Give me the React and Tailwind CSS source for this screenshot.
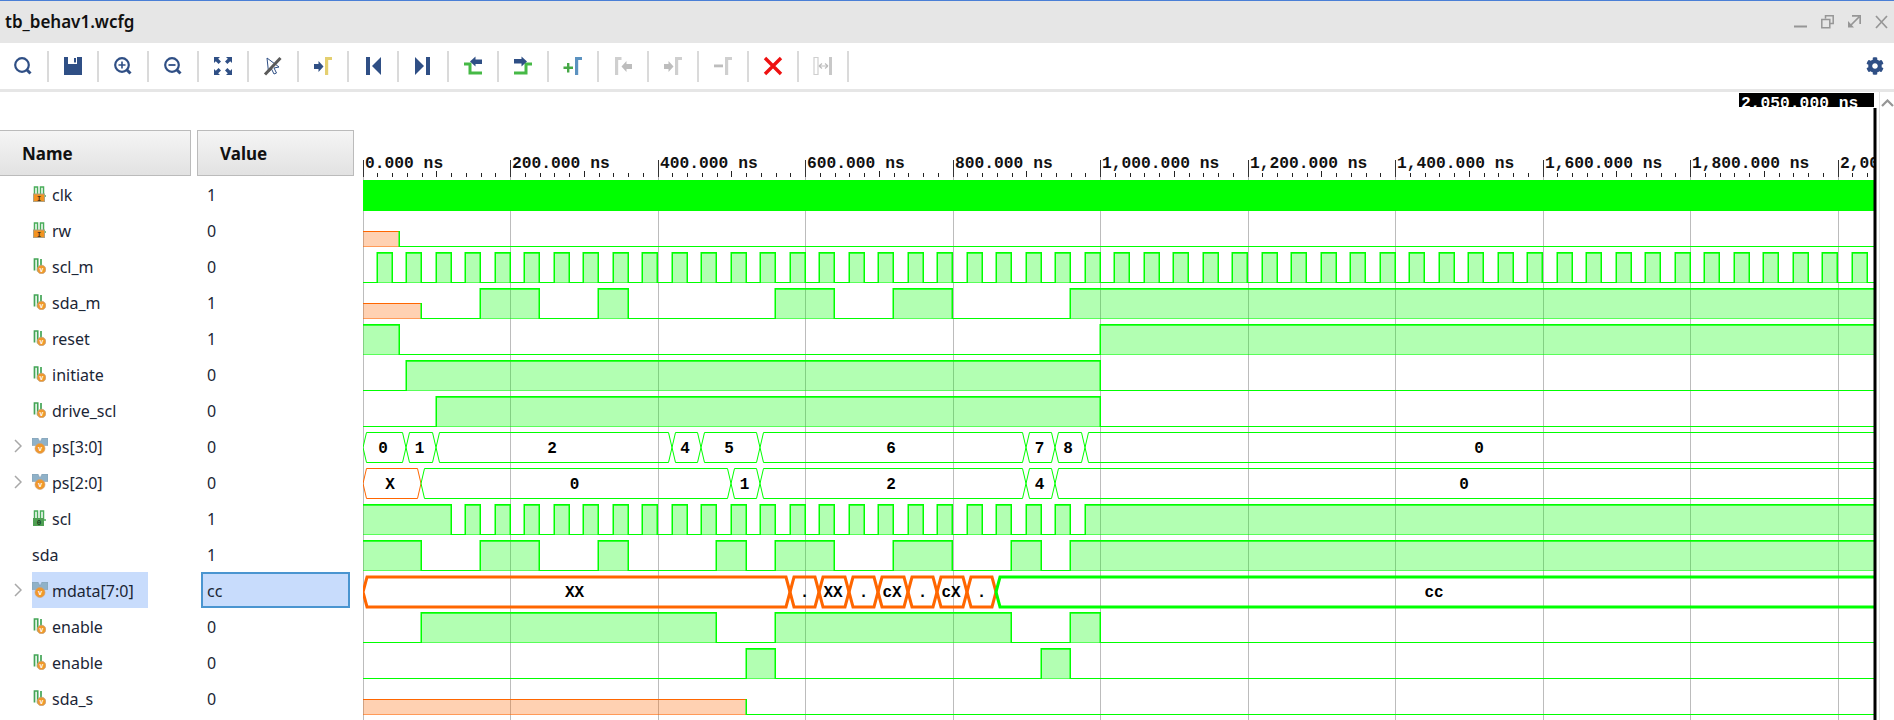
import React from 'react';
import { FaCog } from 'react-icons/fa';

const BLUE = '#2f4f85';
const G = '#00ff00';
const O = '#ff6600';
const MONO = '"Liberation Mono", monospace';
const X = (t) => Math.round(362 + 0.7375 * t);
const GX = (t) => Math.floor(363.2 + 0.7375 * t);
const END = 2050;

function clock(from, to, startHigh = false) {
  const s = [];
  let hi = startHigh;
  for (let t = from; t < to; t += 20) {
    s.push([t, t + 20, hi ? 'H' : 'L']);
    hi = !hi;
  }
  return s;
}

const levels = [
  { k: 1, s: [[0, 50, 'X'], [50, END, 'L']] },
  { k: 2, s: clock(0, END) },
  { k: 3, s: [[0, 80, 'X'], [80, 160, 'L'], [160, 240, 'H'], [240, 320, 'L'], [320, 360, 'H'], [360, 560, 'L'], [560, 640, 'H'], [640, 720, 'L'], [720, 800, 'H'], [800, 960, 'L'], [960, END, 'H']] },
  { k: 4, s: [[0, 50, 'H'], [50, 1000, 'L'], [1000, END, 'H']] },
  { k: 5, s: [[0, 60, 'L'], [60, 1000, 'H'], [1000, END, 'L']] },
  { k: 6, s: [[0, 100, 'L'], [100, 1000, 'H'], [1000, END, 'L']] },
  { k: 9, s: [[0, 120, 'H'], [120, 140, 'L'], ...clock(140, 960, true), [960, 980, 'L'], [980, END, 'H']] },
  { k: 10, s: [[0, 80, 'H'], [80, 160, 'L'], [160, 240, 'H'], [240, 320, 'L'], [320, 360, 'H'], [360, 480, 'L'], [480, 520, 'H'], [520, 560, 'L'], [560, 640, 'H'], [640, 720, 'L'], [720, 800, 'H'], [800, 880, 'L'], [880, 920, 'H'], [920, 960, 'L'], [960, END, 'H']] },
  { k: 12, s: [[0, 80, 'L'], [80, 480, 'H'], [480, 560, 'L'], [560, 880, 'H'], [880, 960, 'L'], [960, 1000, 'H'], [1000, END, 'L']] },
  { k: 13, s: [[0, 520, 'L'], [520, 560, 'H'], [560, 920, 'L'], [920, 960, 'H'], [960, END, 'L']] },
  { k: 14, s: [[0, 520, 'X'], [520, END, 'L']] },
];

const buses = [
  { k: 7, sw: 1, d: 3.5, c: [[0, 60, '0', G, 383], [60, 100, '1', G, 419.5], [100, 420, '2', G, 552], [420, 460, '4', G, 685], [460, 540, '5', G, 729], [540, 900, '6', G, 891], [900, 940, '7', G, 1039.5], [940, 980, '8', G, 1068], [980, 2100, '0', G, 1479]] },
  { k: 8, sw: 1, d: 3.5, c: [[0, 80, 'X', O, 390], [80, 500, '0', G, 574.5], [500, 540, '1', G, 744.5], [540, 900, '2', G, 891], [900, 940, '4', G, 1039.5], [940, 2100, '0', G, 1464]] },
  { k: 11, sw: 3, d: 4, c: [[0, 580, 'XX', O, 574.5], [580, 620, '.', O, 804.5], [620, 660, 'XX', O, 833], [660, 700, '.', O, 863.5], [700, 740, 'cX', O, 892], [740, 780, '.', O, 922.5], [780, 820, 'cX', O, 951], [820, 860, '.', O, 981.5], [860, 2100, 'cc', G, 1434]] },
];

function Digital({ k, s }) {
  const top = 180 + 36 * k;
  const bot = 210 + 36 * k;
  const mid = top + 15;
  const yOf = (v) => (v === 'H' ? top : v === 'X' ? mid : bot);
  return (
    <g>
      {s.map(([a, b, v], i) => {
        const x0 = i === 0 ? 363 : X(a);
        const w = Math.min(X(b), 1874) - x0;
        if (v === 'H')
          return (
            <g key={i}>
              <rect x={x0} y={top} width={w} height={bot - top + 1} fill={G} fillOpacity="0.3" />
              <rect x={x0} y={top} width={w} height="1.7" fill={G} />
              <rect x={x0} y={bot} width={w} height="1" fill={G} fillOpacity="0.5" />
            </g>
          );
        if (v === 'X')
          return (
            <g key={i}>
              <rect x={x0} y={mid} width={w} height={bot - mid + 1} fill={O} fillOpacity="0.3" />
              <rect x={x0} y={mid} width={w} height="1" fill={O} />
              <rect x={x0} y={bot} width={w} height="1" fill={O} fillOpacity="0.5" />
            </g>
          );
        return <rect key={i} x={x0} y={bot} width={w} height="1" fill={G} />;
      })}
      {s.slice(1).map(([a, , v], i) => {
        const p = yOf(s[i][2]);
        const q = yOf(v);
        return <rect key={i} x={X(a) - 0.5} y={Math.min(p, q)} width="1.5" height={Math.abs(p - q) + 1} fill={G} />;
      })}
    </g>
  );
}

function Bus({ k, sw, d, c }) {
  const top = 180 + 36 * k + (sw > 1 ? 1 : 0.5);
  const bot = 210 + 36 * k + (sw > 1 ? 1 : 0.5);
  const mid = (top + bot) / 2;
  return (
    <g>
      {c.map(([a, b, label, col, cx], i) => {
        const x0 = i === 0 ? 363 : X(a);
        const x1 = X(b);
        const pts = `${x0},${mid} ${x0 + d},${top} ${x1 - d},${top} ${x1},${mid} ${x1 - d},${bot} ${x0 + d},${bot}`;
        return (
          <g key={i}>
            <polygon points={pts} fill="none" stroke={col} strokeWidth={sw} />
            <text x={cx} y={mid + 5} textAnchor="middle" fontFamily={MONO} fontWeight="700" fontSize="16" fill="#000">
              {label}
            </text>
          </g>
        );
      })}
    </g>
  );
}

function Ruler() {
  const ticks = [];
  for (let t = 20; t < 2050; t += 20) {
    if (t % 200 === 0) continue;
    const mid = t % 100 === 0;
    ticks.push(<rect key={t} x={GX(t)} y={mid ? 171 : 173} width="1" height={mid ? 6 : 4} fill="#222" />);
  }
  const majors = [];
  for (let t = 0; t <= 2000; t += 200) {
    const x = GX(t);
    const s =
      t === 2000 ? '2,00' : t >= 1000 ? `${Math.floor(t / 1000)},${String(t % 1000).padStart(3, '0')}.000 ns` : `${t}.000 ns`;
    majors.push(
      <g key={t}>
        <rect x={x} y="160" width="1" height="17" fill="#333" />
        <text x={x + 2} y="168" fontFamily={MONO} fontWeight="700" fontSize="16.3" fill="#111">
          {s}
        </text>
      </g>
    );
  }
  return (
    <g clipPath="url(#waveclip)">
      {ticks}
      {majors}
    </g>
  );
}

function Wave() {
  const grid = [];
  for (let t = 0; t <= 2000; t += 200) {
    grid.push(<rect key={t} x={GX(t)} y="177" width="1" height="543" fill="#bcbcbc" />);
  }
  return (
    <svg className="block shrink-0" width="1516" height="628" viewBox="363 92 1516 628">
      <defs>
        <clipPath id="waveclip">
          <rect x="363" y="92" width="1512" height="628" />
        </clipPath>
        <clipPath id="flagclip">
          <rect x="1739" y="93" width="135" height="14" />
        </clipPath>
      </defs>
      {grid}
      <Ruler />
      <rect x="363" y="180" width="1511" height="31" fill={G} />
      <g clipPath="url(#waveclip)">
        {levels.map((l) => (
          <Digital key={l.k} k={l.k} s={l.s} />
        ))}
        {buses.map((b) => (
          <Bus key={b.k} {...b} />
        ))}
      </g>
      <rect x="1739" y="93" width="135" height="14" fill="#000" />
      <text x="1741" y="108" clipPath="url(#flagclip)" fontFamily={MONO} fontSize="16.3" fontWeight="700" fill="#fff">
        2,050.000 ns
      </text>
      <rect x="1873.5" y="108" width="3" height="612" fill="#000" />
    </svg>
  );
}

/* ---------- toolbar icons ---------- */
const Ic = ({ children }) => (
  <svg width="20" height="20" viewBox="0 0 20 20" className="block">
    {children}
  </svg>
);
const Marker = ({ c, flip }) =>
  flip ? <path d="M2 1h6.500v3H5.200v15H2z" fill={c} /> : <path d="M12 1h7v3h-3.800v15H12z" fill={c} />;
const ArrowR = ({ c }) => <path d="M1 8h4.500V5l5 5.500-5 5.500v-3H1z" fill={c} />;
const Lens = ({ children }) => (
  <Ic>
    <circle cx="9" cy="9" r="6.800" fill="none" stroke={BLUE} strokeWidth="2.200" />
    <path d="M14 14l3.500 3.500" stroke={BLUE} strokeWidth="3" />
    {children}
  </Ic>
);

const tools = [
  <Lens />,
  <Ic>
    <path d="M1 1h18v18H1z" fill={BLUE} />
    <path d="M5 1h9v7H5z" fill="#fff" />
    <path d="M11 2h2v4.500h-2z" fill={BLUE} />
  </Ic>,
  <Lens>
    <path d="M9 5.500v7M5.500 9h7" stroke={BLUE} strokeWidth="1.600" />
  </Lens>,
  <Lens>
    <path d="M5.500 9h7" stroke={BLUE} strokeWidth="1.800" />
  </Lens>,
  <Ic>
    <path d="M1 1h6L5.200 2.800 8 5.600 5.600 8 2.800 5.200 1 7zM19 1v6l-1.800-1.800L14.400 8 12 5.600l2.800-2.800L13 1zM1 19v-6l1.800 1.800L5.600 12 8 14.400l-2.800 2.800L7 19zM19 19h-6l1.800-1.800L12 14.400l2.400-2.400 2.800 2.800L19 13z" fill={BLUE} />
  </Ic>,
  <Ic>
    <path d="M4 2l12 9-5 1 2.500 5-2.500 1-2.500-5-3 3z" fill="#fff" stroke={BLUE} strokeWidth="1" />
    <path d="M2 18.500L17.500 2" stroke="#5a5a5a" strokeWidth="3" />
  </Ic>,
  <Ic>
    <ArrowR c={BLUE} />
    <Marker c="#e4cf70" />
  </Ic>,
  <Ic>
    <path d="M3 1h4v18H3z" fill={BLUE} />
    <path d="M18 1v18l-9-9z" fill={BLUE} />
  </Ic>,
  <Ic>
    <path d="M13 1h4v18h-4z" fill={BLUE} />
    <path d="M2 1v18l9-9z" fill={BLUE} />
  </Ic>,
  <Ic>
    <path d="M1 8h6v9h12" fill="none" stroke="#46b946" strokeWidth="3" />
    <path d="M7 5.500l5.500-5v3H19v4.500h-6.500v2.500z" fill={BLUE} />
  </Ic>,
  <Ic>
    <path d="M1 17h12V8h6" fill="none" stroke="#46b946" strokeWidth="3" />
    <path d="M1 3h7.500V.5l5.500 5-5.500 5V7.500H1z" fill={BLUE} />
  </Ic>,
  <Ic>
    <path d="M4 7h2.400v3.500H10V13H6.400v3.500H4V13H.5v-2.500H4z" fill="#46a846" />
    <Marker c="#5b92c0" />
  </Ic>,
  <Ic>
    <Marker c="#cfcfcf" flip />
    <path d="M19 8h-5.500V5l-5 5.500 5 5.500v-3H19z" fill="#bdbdbd" />
  </Ic>,
  <Ic>
    <ArrowR c="#bdbdbd" />
    <Marker c="#cfcfcf" />
  </Ic>,
  <Ic>
    <path d="M1 8.500h9v2.800H1z" fill="#bdbdbd" />
    <Marker c="#cfcfcf" />
  </Ic>,
  <Ic>
    <path d="M2 2l16 16M18 2L2 18" stroke="#ee1111" strokeWidth="3.400" />
  </Ic>,
  <Ic>
    <path d="M1 1.500h4v17H1z" fill="none" stroke="#cfcfcf" strokeWidth="1.200" />
    <path d="M16 1h3v18h-3z" fill="#c8c8c8" />
    <path d="M6 10h9M6 10l3-2.500M6 10l3 2.500M15 10l-3-2.500M15 10l-3 2.500" fill="none" stroke="#bdbdbd" strokeWidth="1.200" />
  </Ic>,
];

/* ---------- signal icons ---------- */
const SigI = () => (
  <svg width="13" height="16" viewBox="0 0 13 16" className="block ml-px">
    <path d="M1.500 9V1h3v9M7.500 9V1h3v9H13" fill="none" stroke="#49ad5a" strokeWidth="1.500" />
    <rect x="0.500" y="8" width="11" height="7.500" fill="#f39320" stroke="#b0a080" strokeWidth="1" />
    <text x="6" y="14.500" textAnchor="middle" fontSize="7" fontWeight="700" fontFamily={MONO} fill="#4a3418">I</text>
  </svg>
);
const SigV = () => (
  <svg width="13" height="16" viewBox="0 0 13 16" className="block ml-px">
    <path d="M1.500 12.500V1h3.200v11.500H8V1" fill="none" stroke="#43a556" strokeWidth="1.700" />
    <circle cx="8.500" cy="11.500" r="4.300" fill="#f0982c" stroke="#c4a27c" strokeWidth="0.800" />
    <text x="8.500" y="14" textAnchor="middle" fontSize="6.500" fontWeight="700" fontFamily={MONO} fill="#fff">v</text>
  </svg>
);
const SigO = () => (
  <svg width="13" height="16" viewBox="0 0 13 16" className="block ml-px">
    <path d="M1.500 9V1h3v9M7.500 9V1h3v9H13" fill="none" stroke="#49ad5a" strokeWidth="1.500" />
    <rect x="0" y="8" width="11" height="8" fill="#4f9f53" />
    <text x="6" y="15" textAnchor="middle" fontSize="7.500" fontWeight="700" fontFamily={MONO} fill="#173d1c">0</text>
  </svg>
);
const SigBus = () => (
  <svg width="16" height="16" viewBox="0 0 16 16" className="block">
    <path d="M0 0h6l2 4 2-4h6v7.500h-4L8 10 4 7.500H0z" fill="#8fb1c8" stroke="#7d96aa" strokeWidth="0.500" />
    <circle cx="8" cy="10.500" r="5" fill="#f0982c" stroke="#d0a070" strokeWidth="0.600" />
    <text x="8" y="13" textAnchor="middle" fontSize="7" fontWeight="700" fontFamily={MONO} fill="#fff">v</text>
  </svg>
);

const rows = [
  ['clk', '1', SigI],
  ['rw', '0', SigI],
  ['scl_m', '0', SigV],
  ['sda_m', '1', SigV],
  ['reset', '1', SigV],
  ['initiate', '0', SigV],
  ['drive_scl', '0', SigV],
  ['ps[3:0]', '0', SigBus, true],
  ['ps[2:0]', '0', SigBus, true],
  ['scl', '1', SigO],
  ['sda', '1', null],
  ['mdata[7:0]', 'cc', SigBus, true, true],
  ['enable', '0', SigV],
  ['enable', '0', SigV],
  ['sda_s', '0', SigV],
];

const Chevron = () => (
  <svg width="8" height="14" viewBox="0 0 8 14" className="block ml-[14px]">
    <path d="M1 1l6 6-6 6" fill="none" stroke="#a8a8a8" strokeWidth="1.500" />
  </svg>
);

export default function App() {
  return (
    <div className="w-[1894px] h-[720px] overflow-hidden bg-white flex flex-col font-['Noto_Sans',sans-serif] text-[#1b2636]">
      <div className="h-px shrink-0 bg-[#4a7fd6]" />
      <div className="h-[42px] shrink-0 bg-[#e6e6e6] flex items-center justify-between pl-[5px] pr-[6px]">
        <span className="text-[17px] font-semibold text-[#111]">tb_behav1.wcfg</span>
        <div className="flex items-center gap-[14px]">
          <svg width="13" height="14" viewBox="0 0 13 14" className="block">
            <path d="M0 11.500h13" stroke="#969696" strokeWidth="2" />
          </svg>
          <svg width="13" height="14" viewBox="0 0 13 14" className="block">
            <path d="M4.500 3.500V.8h7.700v7.700H9.500M.8 4.500h8v8.200h-8z" fill="none" stroke="#969696" strokeWidth="1.500" />
          </svg>
          <svg width="13" height="14" viewBox="0 0 13 14" className="block">
            <path d="M4 .8h8.200V9M11 2L2 11" fill="none" stroke="#969696" strokeWidth="1.700" />
            <path d="M0 6l6 6.500H0z" fill="#969696" />
          </svg>
          <svg width="13" height="14" viewBox="0 0 13 14" className="block">
            <path d="M1 1l11 12M12 1L1 13" stroke="#969696" strokeWidth="1.700" />
          </svg>
        </div>
      </div>
      <div className="h-[46px] shrink-0 flex items-center justify-between pr-[10px]">
        <div className="flex items-center -ml-px">
          {tools.map((t, i) => (
            <div key={i} className="w-[50px] h-[31px] border-r-2 border-[#dadada] flex items-center justify-center">
              {t}
            </div>
          ))}
        </div>
        <FaCog size={18} color={BLUE} className="block" />
      </div>
      <div className="h-[3px] shrink-0 bg-[#e6e6e6]" />
      <div className="flex h-[628px] shrink-0">
        <div className="w-[191px] shrink-0 pt-[38px]">
          <div className="h-[46px] border border-l-0 border-[#bbbbbb] bg-gradient-to-b from-[#f5f5f5] to-[#e2e2e2] flex items-center pl-[22px] pt-[2px] text-[17px] font-bold text-[#111]">
            Name
          </div>
          {rows.map(([name, , Icon, expand, sel], i) => (
            <div key={i} className="h-9 flex items-center">
              <div className="w-8 shrink-0">{expand && <Chevron />}</div>
              <div className={`h-full flex items-center ${sel ? 'bg-[#c8dcfc] w-[116px]' : ''}`}>
                {Icon && (
                  <div className="w-5 shrink-0">
                    <Icon />
                  </div>
                )}
                <span className="text-base pt-[2px] leading-none">{name}</span>
              </div>
            </div>
          ))}
        </div>
        <div className="w-[157px] shrink-0 ml-[6px] mr-[9px] pt-[38px]">
          <div className="h-[46px] border border-[#bbbbbb] bg-gradient-to-b from-[#f5f5f5] to-[#e2e2e2] flex items-center pl-[22px] pt-[2px] text-[17px] font-bold text-[#111]">
            Value
          </div>
          {rows.map(([name, val, , , sel], i) =>
            sel ? (
              <div key={i} className="h-9 ml-1 w-[149px] border-2 border-[#4a95d0] bg-[#c8dcfc] flex items-center pl-1">
                <span className="text-base pt-[2px] leading-none">{val}</span>
              </div>
            ) : (
              <div key={i} className="h-9 flex items-center pl-[10px]">
                <span className="text-base pt-[2px] leading-none">{val}</span>
              </div>
            )
          )}
        </div>
        <Wave />
        <div className="flex-1 border-l border-[#e2e2e2] flex justify-center pt-[7px]">
          <svg width="13" height="8" viewBox="0 0 13 8" className="block">
            <path d="M1 7l5.500-5.500L12 7" fill="none" stroke="#969696" strokeWidth="2.200" />
          </svg>
        </div>
      </div>
    </div>
  );
}
